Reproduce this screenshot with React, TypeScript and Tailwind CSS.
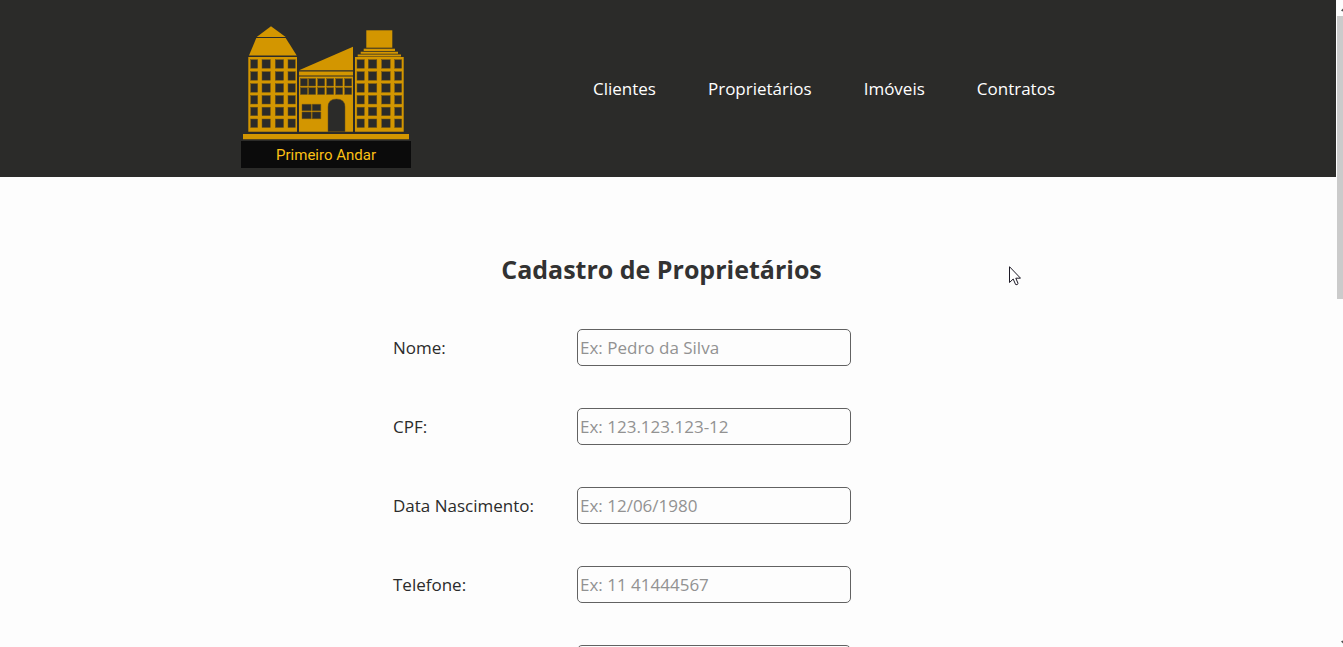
import React from "react";

const links = ["Clientes", "Proprietários", "Imóveis", "Contratos"];

const fields = [
  { id: "nome", label: "Nome:", placeholder: "Ex: Pedro da Silva" },
  { id: "cpf", label: "CPF:", placeholder: "Ex: 123.123.123-12" },
  { id: "nascimento", label: "Data Nascimento:", placeholder: "Ex: 12/06/1980" },
  { id: "telefone", label: "Telefone:", placeholder: "Ex: 11 41444567" },
  { id: "email", label: "", placeholder: "" },
];

const rows = [33.7, 45.7, 57.7, 69.5, 81.2, 93];
const leftColumns = [
  [9.7, 7],
  [21, 8.3],
  [34.3, 8.3],
  [47, 7.3],
];
const rightColumns = [
  [116, 7.3],
  [127.3, 8.5],
  [140.7, 8.5],
  [153.7, 7],
];
const middleColumns = [59.4, 67.7, 76.7, 85.7, 94.7, 103.7];

function Buildings() {
  return (
    <svg viewBox="0 0 170 115" className="block w-full" aria-hidden="true">
      <g fill="#d39600">
        <path d="M30 .3 44.7 11H15.7Z" />
        <path d="M15.3 12h29.4l11 17.4H8Z" />
        <path d="M7.3 31H56v74.7H7.3Z" />
        <path d="M58 44.3 112 20.7v23.6Z" />
        <path d="M58 45.4h54v4H58Z" />
        <path d="M58 50.4h54v55.3H58Z" />
        <path d="M125.3 4.3h26v17.4h-26Z" />
        <path d="M122.7 22.7H154V25h-31.3Z" />
        <path d="M119.7 25.8H157v2h-37.3Z" />
        <path d="M116.7 28.5H160v1.9h-43.3Z" />
        <path d="M114 31h48.7v74.7H114Z" />
        <path d="M2 108h166v5.3H2Z" />
      </g>
      <g fill="#2b2b29" stroke="#6d5318" strokeWidth=".5">
        {rows.map((y) =>
          [...leftColumns, ...rightColumns].map(([x, w]) => (
            <rect key={`${x}-${y}`} x={x} y={y} width={w} height="8.5" />
          )),
        )}
        {middleColumns.map((x) => (
          <React.Fragment key={x}>
            <rect x={x} y="52.6" width="7" height="7.4" />
            <rect x={x} y="61.7" width="7" height="6.8" />
          </React.Fragment>
        ))}
        <path d="M87 105.7V81q0-8 8.5-8t8.5 8v24.7Z" />
        <path d="M61 78.3h9.2v6.5H61ZM71.2 78.3h8.6v6.5h-8.6ZM61 86h9.2v6.7H61ZM71.2 86h8.6v6.7h-8.6Z" />
      </g>
    </svg>
  );
}

function Scrollbar() {
  return (
    <div className="flex w-[7px] shrink-0 flex-col overflow-hidden bg-[#fdfdfd] pl-px" aria-hidden="true">
      <svg viewBox="0 0 17 16" className="h-4 w-[17px] shrink-0">
        <path d="M4 10.5 8.500 6l4.500 4.500-1.500 1L8.500 8.500l-3 3Z" fill="#505050" />
      </svg>
      <div className="h-[283px] shrink-0 bg-[#cbcbcb]" />
      <svg viewBox="0 0 17 16" className="mt-auto h-4 w-[17px] shrink-0">
        <path d="M4 10.500 8.500 15l4.500-4.500-1.500-1-3 3-3-3Z" fill="#505050" />
      </svg>
    </div>
  );
}

export default function App() {
  return (
    <div className="flex h-screen overflow-hidden bg-[#fdfdfd] font-['Segoe_UI','Open_Sans',sans-serif] text-[17px] text-[#2b2b2b]">
      <div className="min-w-0 flex-1">
        <header className="bg-[#2b2b29] pt-[26px] pb-[9px]">
          <div className="mx-auto flex max-w-[854px] items-center justify-between pr-10">
            <a href="#inicio" className="block w-[170px]">
              <Buildings />
              <span className="block bg-[#0b0b0b] pt-px text-center font-['Roboto',sans-serif] text-[15px] leading-[26px] text-[#fcc015]">
                Primeiro Andar
              </span>
            </a>
            <nav className="flex gap-[52px] pb-4 text-white">
              {links.map((link) => (
                <a key={link} href="#">
                  {link}
                </a>
              ))}
            </nav>
          </div>
        </header>

        <main className="pt-[74px] pr-[13px]">
          <form className="mx-auto max-w-[537px]">
            <h1 className="text-center text-[25px] leading-9 font-bold text-[#323232]">
              Cadastro de Proprietários
            </h1>
            <div className="mt-[42px] flex flex-col gap-[42px]">
              {fields.map(({ id, label, placeholder }) => (
                <div key={id} className="flex items-center">
                  <label htmlFor={id} className="w-[184px]">
                    {label}
                  </label>
                  <input
                    id={id}
                    placeholder={placeholder}
                    className="h-[37px] w-[274px] rounded-[5px] border border-[#626262] bg-transparent px-0.5 placeholder:text-[#929292]"
                  />
                </div>
              ))}
            </div>
          </form>
        </main>
      </div>
      <Scrollbar />

      <svg
        viewBox="0 0 12 20"
        className="pointer-events-none absolute top-[266px] left-[1009px] h-5 w-3"
        aria-hidden="true"
      >
        <path
          d="M.5.700v15.800l3.700-3.500 2.400 5.500q1.500.8 2.500-.9L6.800 12.200h4.700Z"
          fill="#fff"
          stroke="#1d1a26"
          strokeWidth="1"
        />
      </svg>
    </div>
  );
}
